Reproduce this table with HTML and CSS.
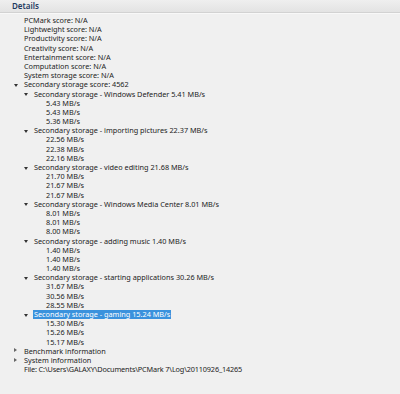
FILE: index.html
```html
<!DOCTYPE html>
<html>
<head>
<meta charset="utf-8">
<link rel="stylesheet" href="styles.css">
</head>
<body>
<div class="panel">
  <div class="header"><span class="title">Details</span></div>
  <div class="tree">
    <div class="row l1">PCMark score: N/A</div>
    <div class="row l1">Lightweight score: N/A</div>
    <div class="row l1">Productivity score: N/A</div>
    <div class="row l1">Creativity score: N/A</div>
    <div class="row l1">Entertainment score: N/A</div>
    <div class="row l1">Computation score: N/A</div>
    <div class="row l1">System storage score: N/A</div>
    <div class="row l1"><span class="tw open"></span>Secondary storage score: 4562</div>

    <div class="row l2"><span class="tw open"></span>Secondary storage - Windows Defender 5.41 MB/s</div>
    <div class="row l3">5.43 MB/s</div>
    <div class="row l3">5.43 MB/s</div>
    <div class="row l3">5.36 MB/s</div>

    <div class="row l2"><span class="tw open"></span>Secondary storage - importing pictures 22.37 MB/s</div>
    <div class="row l3">22.56 MB/s</div>
    <div class="row l3">22.38 MB/s</div>
    <div class="row l3">22.16 MB/s</div>

    <div class="row l2"><span class="tw open"></span>Secondary storage - video editing 21.68 MB/s</div>
    <div class="row l3">21.70 MB/s</div>
    <div class="row l3">21.67 MB/s</div>
    <div class="row l3">21.67 MB/s</div>

    <div class="row l2"><span class="tw open"></span>Secondary storage - Windows Media Center 8.01 MB/s</div>
    <div class="row l3">8.01 MB/s</div>
    <div class="row l3">8.01 MB/s</div>
    <div class="row l3">8.00 MB/s</div>

    <div class="row l2"><span class="tw open"></span>Secondary storage - adding music 1.40 MB/s</div>
    <div class="row l3">1.40 MB/s</div>
    <div class="row l3">1.40 MB/s</div>
    <div class="row l3">1.40 MB/s</div>

    <div class="row l2"><span class="tw open"></span>Secondary storage - starting applications 30.26 MB/s</div>
    <div class="row l3">31.67 MB/s</div>
    <div class="row l3">30.56 MB/s</div>
    <div class="row l3">28.55 MB/s</div>

    <div class="row l2"><span class="tw open"></span><span class="sel">Secondary storage - gaming 15.24 MB/s</span></div>
    <div class="row l3">15.30 MB/s</div>
    <div class="row l3">15.26 MB/s</div>
    <div class="row l3">15.17 MB/s</div>

    <div class="row l1"><span class="tw closed"></span>Benchmark information</div>
    <div class="row l1"><span class="tw closed"></span>System information</div>
    <div class="row l1 file">File: C:\Users\GALAXY\Documents\PCMark 7\Log\20110926_14265</div>
  </div>
</div>
</body>
</html>
```

FILE: styles.css
```css
html, body {
  margin: 0;
  padding: 0;
  background: #f0f0f0;
}
body {
  width: 400px;
  height: 394px;
  overflow: hidden;
  font-family: "Noto Sans", "Open Sans", sans-serif;
  font-size: 7.3px;
  color: #1c1c1c;
}
.panel {
  display: flex;
  flex-direction: column;
}
.header {
  height: 12px;
  background: linear-gradient(#efefef, #e3e3e3);
  border-bottom: 1px solid #d2d2d2;
  box-shadow: 0 1px 0 #f8f8f8;
  display: flex;
  align-items: center;
  padding-left: 12px;
}
.title {
  font-size: 8px;
  color: #1e3a5f;
  font-weight: 600;
  line-height: 10px;
}
.tree {
  padding-top: 3px;
  display: flex;
  flex-direction: column;
}
.row {
  height: 9.2px;
  line-height: 9.2px;
  white-space: nowrap;
  display: flex;
  align-items: center;
}
.l1 { padding-left: 24px; }
.l2 { padding-left: 34px; }
.l3 { padding-left: 46px; }
.file { letter-spacing: -0.15px; }
.tw {
  width: 0;
  height: 0;
  margin-left: -10px;
  margin-right: 10px;
  position: relative;
}
.tw.open::before {
  content: "";
  position: absolute;
  left: 0;
  top: -1px;
  border-left: 2.5px solid transparent;
  border-right: 2.5px solid transparent;
  border-top: 3px solid #333;
}
.tw.closed::before {
  content: "";
  position: absolute;
  left: 0;
  top: -3px;
  border-top: 2.5px solid transparent;
  border-bottom: 2.5px solid transparent;
  border-left: 3px solid #666;
}
.sel {
  background: #3a92dd;
  color: #fff;
  margin-left: -1px;
  padding: 0 1px;
  line-height: 9px;
}
```
